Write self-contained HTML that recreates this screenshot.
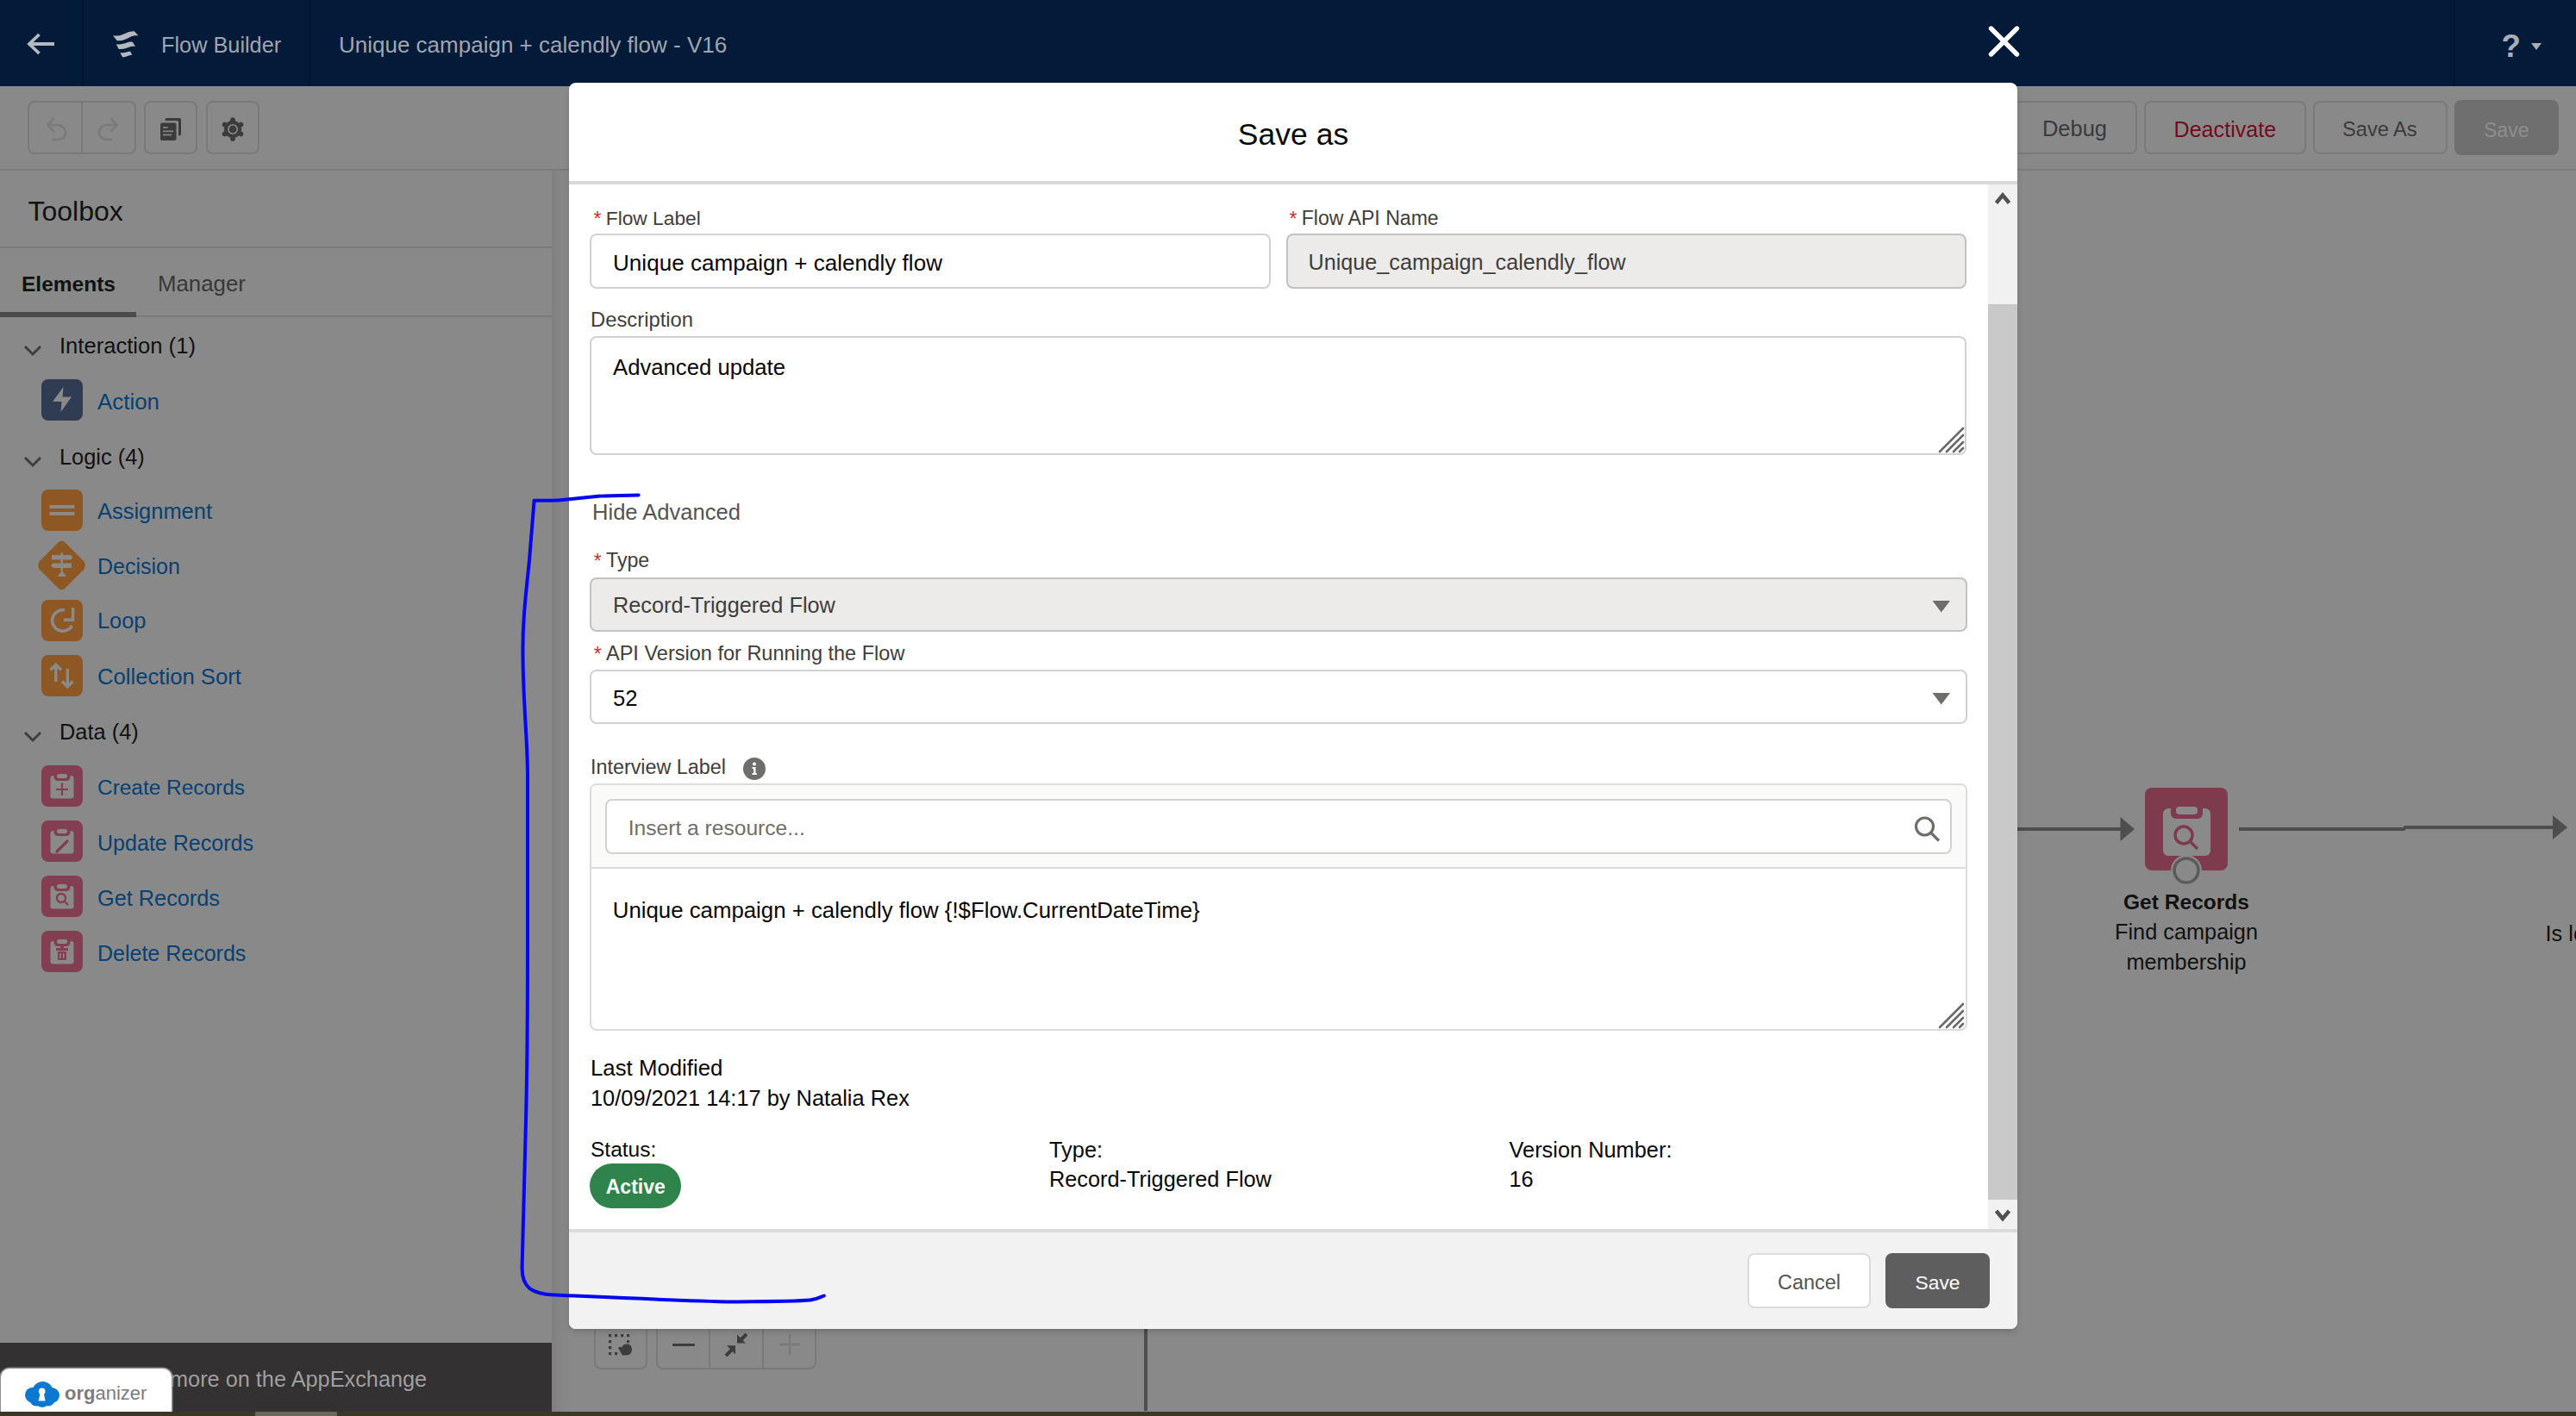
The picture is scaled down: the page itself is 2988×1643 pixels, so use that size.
<!DOCTYPE html>
<html><head><meta charset="utf-8"><style>
html,body{margin:0;padding:0;width:2988px;height:1643px;overflow:hidden;background:#898989;font-family:"Liberation Sans", sans-serif;}
.t{position:absolute;line-height:1;white-space:nowrap;font-family:"Liberation Sans", sans-serif;}
svg{overflow:visible}
</style></head><body>
<div style="position:absolute;left:0px;top:0px;width:2988px;height:100px;background:#031a38"></div>
<div style="position:absolute;left:95px;top:0px;width:2px;height:100px;background:#02132b"></div>
<div style="position:absolute;left:358px;top:0px;width:2px;height:100px;background:#02132b"></div>
<div style="position:absolute;left:2846px;top:0px;width:2px;height:100px;background:#02132b"></div>
<svg style="position:absolute;left:0;top:0" width="400" height="100">
<path d="M45.5,40 L34,51 L45.5,62 M34,51 L63,51" fill="none" stroke="#b4b9c0" stroke-width="3.8" stroke-linecap="butt" stroke-linejoin="miter"/>
<g fill="#b4b9c0">
<path d="M131,41.3 C138.5,42.3 142,40.5 146,38.6 C150,36.8 153,36 156,36.4 L160.6,41.6 C157,41 154,41.6 150.5,43.2 C146.5,45.2 142.5,47.4 137.5,47.3 L135.8,47.2 Z"/>
<path d="M134.8,51.4 C140.5,52 144,50.6 147,49.5 C150,48.4 152,48.3 153.8,48.7 L157,54 C154.5,53.4 152,53.8 149,55 C146,56.2 142.8,57.1 139.5,57 L137.8,56.9 Z"/>
<path d="M139.4,61 C143.5,61.6 146,60.6 148.3,59.9 C149.8,59.5 150.8,59.6 151.5,59.9 L153.2,64.2 C151.5,63.9 150,64.2 148,65 C146,65.8 144,66.3 142,66.2 Z"/>
</g>
</svg>
<div class="t" style="left:187.00px;top:39.83px;font-size:25.3px;color:#9fa6b1;font-weight:400;">Flow Builder</div>
<div class="t" style="left:393.00px;top:38.79px;font-size:26.0px;color:#9fa6b1;font-weight:400;">Unique campaign + calendly flow - V16</div>
<svg style="position:absolute;left:2300px;top:24px" width="48" height="48"><path d="M9.5,9 L39.5,39 M39.5,9 L9.5,39" stroke="#fff" stroke-width="5.4" stroke-linecap="round"/></svg>
<div class="t" style="left:2901.50px;top:36.10px;font-size:36.5px;color:#a9aeb6;font-weight:700;">?</div>
<svg style="position:absolute;left:2930px;top:45px" width="24" height="20"><path d="M6,5 L18,5 L12,13 Z" fill="#a9aeb6"/></svg>
<div style="position:absolute;left:0px;top:100px;width:2988px;height:97px;background:#898989"></div>
<div style="position:absolute;left:0px;top:196px;width:2988px;height:2px;background:#7b7b7b"></div>
<div style="position:absolute;left:32px;top:117px;width:126px;height:62px;box-sizing:border-box;border:2px solid #7a7a7a;border-radius:8px;"></div>
<div style="position:absolute;left:94px;top:117px;width:2px;height:62px;background:#7a7a7a"></div>
<div style="position:absolute;left:167px;top:117px;width:62px;height:62px;box-sizing:border-box;border:2px solid #7a7a7a;border-radius:8px;"></div>
<div style="position:absolute;left:239px;top:117px;width:62px;height:62px;box-sizing:border-box;border:2px solid #7a7a7a;border-radius:8px;"></div>
<svg style="position:absolute;left:0;top:100px" width="320" height="100">
<g fill="none" stroke="#7a7a7a" stroke-width="2.6" stroke-linecap="round" stroke-linejoin="round">
<path d="M55,45 L62,38 M55,45 L62,52 M56,45 L66,45 C72,45 76,49 76,54 C76,59 72,62 66,62 L62,62"/>
<path d="M136,45 L129,38 M136,45 L129,52 M135,45 L125,45 C119,45 115,49 115,54 C115,59 119,62 125,62 L129,62"/>
</g>
<path fill="#3b3b3b" d="M193.5,37 L208,37 Q210,37 210,39 L210,55.5 Q210,57.5 208,57.5 L207,57.5 L207,42 Q207,40 205,40 L191.5,40 L191.5,39 Q191.5,37 193.5,37 Z"/>
<rect x="186" y="42.5" width="18.5" height="20.5" rx="2" fill="#3b3b3b"/>
<g fill="#8a8a8a"><rect x="189" y="47.2" width="5.5" height="1.6"/><rect x="189" y="51.5" width="12" height="1.6"/><rect x="189" y="55.6" width="10" height="1.7"/></g>
<g fill="#3b3b3b"><circle cx="270" cy="50" r="10.2"/><circle cx="270.00" cy="38.80" r="2.6"/><circle cx="279.70" cy="44.40" r="2.6"/><circle cx="279.70" cy="55.60" r="2.6"/><circle cx="270.00" cy="61.20" r="2.6"/><circle cx="260.30" cy="55.60" r="2.6"/><circle cx="260.30" cy="44.40" r="2.6"/><rect x="267.4" y="37.5" width="5.2" height="6" transform="rotate(0 270 50)"/><rect x="267.4" y="37.5" width="5.2" height="6" transform="rotate(60 270 50)"/><rect x="267.4" y="37.5" width="5.2" height="6" transform="rotate(120 270 50)"/><rect x="267.4" y="37.5" width="5.2" height="6" transform="rotate(180 270 50)"/><rect x="267.4" y="37.5" width="5.2" height="6" transform="rotate(240 270 50)"/><rect x="267.4" y="37.5" width="5.2" height="6" transform="rotate(300 270 50)"/></g>
<circle cx="270" cy="50" r="5.2" fill="none" stroke="#8a8a8a" stroke-width="1.6"/><circle cx="270" cy="50" r="3.4" fill="#3b3b3b"/>
</svg>
<div style="position:absolute;left:2300px;top:117px;width:179px;height:62px;box-sizing:border-box;border:2px solid #7a7a7a;border-radius:8px;"></div>
<div style="position:absolute;left:2487px;top:117px;width:188px;height:62px;box-sizing:border-box;border:2px solid #7a7a7a;border-radius:8px;"></div>
<div style="position:absolute;left:2683px;top:117px;width:156px;height:62px;box-sizing:border-box;border:2px solid #7a7a7a;border-radius:8px;"></div>
<div style="position:absolute;left:2847px;top:116px;width:121px;height:64px;background:#6f6f6f;border-radius:8px"></div>
<div class="t" style="left:2369.00px;top:137.45px;font-size:25.45px;color:#3a3a3a;font-weight:400;">Debug</div>
<div class="t" style="left:2521.50px;top:137.72px;font-size:25.13px;color:#730b1a;font-weight:400;">Deactivate</div>
<div class="t" style="left:2717.00px;top:138.98px;font-size:23.64px;color:#3a3a3a;font-weight:400;">Save As</div>
<div class="t" style="left:2881.00px;top:139.53px;font-size:23.0px;color:#8e8e8e;font-weight:400;">Save</div>
<div style="position:absolute;left:0px;top:198px;width:640px;height:1360px;background:#898989"></div>
<div style="position:absolute;left:640px;top:198px;width:20px;height:1440px;background:linear-gradient(to right,#808080,#868686 60%,#888888)"></div>
<div class="t" style="left:32.50px;top:228.91px;font-size:32px;color:#121212;font-weight:400;">Toolbox</div>
<div style="position:absolute;left:0px;top:286px;width:640px;height:2px;background:#7b7b7b"></div>
<div class="t" style="left:25.00px;top:318.26px;font-size:24.5px;color:#111;font-weight:700;">Elements</div>
<div class="t" style="left:183.00px;top:317.16px;font-size:25.8px;color:#383838;font-weight:400;">Manager</div>
<div style="position:absolute;left:0px;top:366px;width:640px;height:2px;background:#7b7b7b"></div>
<div style="position:absolute;left:0px;top:362px;width:158px;height:6px;background:#4a4a4a"></div>
<svg style="position:absolute;left:26px;top:399px" width="24" height="20"><path d="M3,3 L12,12 L21,3" fill="none" stroke="#3e3e3e" stroke-width="3"/></svg>
<div class="t" style="left:69.00px;top:389.32px;font-size:25.6px;color:#111;font-weight:400;">Interaction (1)</div>
<svg style="position:absolute;left:26px;top:528px" width="24" height="20"><path d="M3,3 L12,12 L21,3" fill="none" stroke="#3e3e3e" stroke-width="3"/></svg>
<div class="t" style="left:69.00px;top:518.49px;font-size:25.4px;color:#111;font-weight:400;">Logic (4)</div>
<svg style="position:absolute;left:26px;top:847px" width="24" height="20"><path d="M3,3 L12,12 L21,3" fill="none" stroke="#3e3e3e" stroke-width="3"/></svg>
<div class="t" style="left:69.00px;top:837.49px;font-size:25.4px;color:#111;font-weight:400;">Data (4)</div>
<div class="t" style="left:113.00px;top:454.07px;font-size:25.9px;color:#074172;font-weight:400;">Action</div>
<div class="t" style="left:113.00px;top:581.44px;font-size:25.46px;color:#074172;font-weight:400;">Assignment</div>
<div class="t" style="left:113.00px;top:644.81px;font-size:25.03px;color:#074172;font-weight:400;">Decision</div>
<div class="t" style="left:113.00px;top:708.49px;font-size:25.4px;color:#074172;font-weight:400;">Loop</div>
<div class="t" style="left:113.00px;top:772.76px;font-size:25.68px;color:#074172;font-weight:400;">Collection Sort</div>
<div class="t" style="left:113.00px;top:901.82px;font-size:24.42px;color:#074172;font-weight:400;">Create Records</div>
<div class="t" style="left:113.00px;top:966.29px;font-size:25.05px;color:#074172;font-weight:400;">Update Records</div>
<div class="t" style="left:113.00px;top:1029.58px;font-size:25.3px;color:#074172;font-weight:400;">Get Records</div>
<div class="t" style="left:113.00px;top:1093.83px;font-size:25.0px;color:#074172;font-weight:400;">Delete Records</div>
<svg style="position:absolute;left:0;top:0" width="120" height="1140">
<rect x="48" y="440" width="48" height="48" rx="8" fill="#2f3c51"/>
<path d="M73.5,449 L61,466 L71.5,466 L70.5,478 L83,460.5 L72.5,460.5 Z" fill="#8a8a8a"/>
<rect x="48" y="568" width="48" height="48" rx="8" fill="#8d5824"/>
<rect x="57.5" y="586" width="29" height="4" rx="1" fill="#8a8a8a"/><rect x="57.5" y="594" width="29" height="4" rx="1" fill="#8a8a8a"/>
<path d="M71.5,627.5 Q73.5,627.5 75.5,629.5 L97.5,651.5 Q100,656 97.5,660.5 L75.5,682.5 Q71.5,686 67.5,682.5 L45.5,660.5 Q43,656 45.5,651.5 L67.5,629.5 Q69.5,627.5 71.5,627.5 Z" fill="#8d5824"/>
<g fill="#8a8a8a"><path d="M60,644 L82,644 L84.5,646.8 L82,649.5 L60,649.5 Z"/><path d="M61.5,653.6 L83,653.6 L83,659 L61.5,659 L58.8,656.3 Z"/><rect x="70.3" y="641.5" width="2.5" height="3"/><rect x="70.3" y="649" width="2.5" height="5"/><rect x="70.3" y="658.5" width="2.5" height="4"/><path d="M66.8,669 L71.9,662 L77,669 Z"/></g>
<rect x="48" y="696" width="48" height="48" rx="8" fill="#8d5824"/>
<path d="M75,708 A12.2,12.2 0 1 0 83.5,726" fill="none" stroke="#8a8a8a" stroke-width="3.6"/>
<path d="M84.6,705 L84.6,719.2 L74,719.2" fill="none" stroke="#8a8a8a" stroke-width="3.4"/>
<rect x="48" y="760" width="48" height="48" rx="8" fill="#8d5824"/>
<g fill="none" stroke="#8a8a8a" stroke-width="3.4"><path d="M64.8,772 L64.8,791 M58.5,777.5 L64.8,771.2 L71.1,777.5"/><path d="M78.3,776 L78.3,796 M72,790.5 L78.3,796.8 L84.6,790.5"/></g>
<rect x="48" y="888" width="48" height="48" rx="8" fill="#833e52"/>
<rect x="58.5" y="900" width="27" height="26.5" rx="3" fill="#8a8a8a"/>
<rect x="62.5" y="895.5" width="19" height="10.5" rx="4.5" fill="#833e52"/><rect x="66" y="898" width="12" height="5" rx="2.5" fill="#8a8a8a"/>
<rect x="48" y="952" width="48" height="48" rx="8" fill="#833e52"/>
<rect x="58.5" y="964" width="27" height="26.5" rx="3" fill="#8a8a8a"/>
<rect x="62.5" y="959.5" width="19" height="10.5" rx="4.5" fill="#833e52"/><rect x="66" y="962" width="12" height="5" rx="2.5" fill="#8a8a8a"/>
<rect x="48" y="1016" width="48" height="48" rx="8" fill="#833e52"/>
<rect x="58.5" y="1028" width="27" height="26.5" rx="3" fill="#8a8a8a"/>
<rect x="62.5" y="1023.5" width="19" height="10.5" rx="4.5" fill="#833e52"/><rect x="66" y="1026" width="12" height="5" rx="2.5" fill="#8a8a8a"/>
<rect x="48" y="1080" width="48" height="48" rx="8" fill="#833e52"/>
<rect x="58.5" y="1092" width="27" height="26.5" rx="3" fill="#8a8a8a"/>
<rect x="62.5" y="1087.5" width="19" height="10.5" rx="4.5" fill="#833e52"/><rect x="66" y="1090" width="12" height="5" rx="2.5" fill="#8a8a8a"/>

<g stroke="#833e52" stroke-width="2.2" fill="none"><path d="M72,908.5 L72,923 M65,916 L79,916"/></g>
<g stroke="#833e52" stroke-width="3.2" fill="none" stroke-linecap="round"><path d="M66,988 L78,976"/></g>
<g stroke="#833e52" stroke-width="2.4" fill="none"><circle cx="71" cy="1042" r="5"/><path d="M74.5,1045.5 L79,1050"/></g>
<g fill="#833e52"><rect x="65" y="1100" width="14" height="3"/><rect x="67" y="1104" width="10" height="10"/><rect x="70" y="1097" width="4" height="3"/></g>
<g fill="#8a8a8a"><rect x="69" y="1106" width="1.5" height="6"/><rect x="73" y="1106" width="1.5" height="6"/></g>
</svg>
<div style="position:absolute;left:0px;top:1558px;width:640px;height:80px;background:#333131"></div>
<div class="t" style="left:197.00px;top:1587.58px;font-size:25.3px;color:#a09f9f;font-weight:400;">more on the AppExchange</div>
<div style="position:absolute;left:1px;top:1588px;width:198px;height:50px;background:#fff;border-radius:10px 10px 0 0;box-shadow:0 0 0 1.5px #8f8f8f"></div>
<svg style="position:absolute;left:20px;top:1596px" width="60" height="42">
<g fill="#0b79d0"><circle cx="29.5" cy="19" r="12"/><circle cx="18" cy="22.7" r="9"/><circle cx="40" cy="23" r="9"/><circle cx="29" cy="28" r="9"/><circle cx="22" cy="28" r="7.5"/><circle cx="36" cy="28" r="7.5"/></g>
<circle cx="28.7" cy="18.4" r="3.8" fill="#fff"/><path d="M26.8,20 L30.6,20 L32.6,29.5 L24.6,29.5 Z" fill="#fff"/>
</svg>
<div class="t" style="left:75.00px;top:1606.37px;font-size:22px;color:#7b7b7b;font-weight:400;"><b>org</b>anizer</div>
<div style="position:absolute;left:0px;top:1638px;width:2988px;height:5px;background:#3a3727"></div>
<div style="position:absolute;left:296px;top:1638px;width:95px;height:5px;background:#6a685c"></div>
<div style="position:absolute;left:660px;top:198px;width:2328px;height:1440px;background:#898989"></div>
<div style="position:absolute;left:689px;top:1527px;width:62px;height:62px;box-sizing:border-box;border:2px solid #7a7a7a;border-radius:8px;"></div>
<div style="position:absolute;left:761px;top:1527px;width:186px;height:62px;box-sizing:border-box;border:2px solid #7a7a7a;border-radius:8px;"></div>
<div style="position:absolute;left:822px;top:1527px;width:2px;height:62px;background:#7a7a7a"></div>
<div style="position:absolute;left:884px;top:1527px;width:2px;height:62px;background:#7a7a7a"></div>
<svg style="position:absolute;left:680px;top:1540px" width="280" height="40">
<g fill="#3d3d3d"><rect x="26" y="8" width="3.2" height="3.2"/><rect x="33" y="8" width="3.2" height="3.2"/><rect x="40" y="8" width="3.2" height="3.2"/><rect x="47" y="8" width="3.2" height="3.2"/>
<rect x="26" y="15" width="3.2" height="3.2"/><rect x="47" y="15" width="3.2" height="3.2"/><rect x="26" y="22" width="3.2" height="3.2"/><rect x="26" y="29" width="3.2" height="3.2"/><rect x="33" y="29" width="3.2" height="3.2"/>
<path d="M37,24 Q39,22 41,23.5 L43,20.5 Q46,19 50,20 Q53,22 53,26 L52,30 Q50,32.5 46,32.5 L42,32.5 Z"/></g>
<rect x="100" y="19" width="26" height="3" rx="1" fill="#3d3d3d"/>
<g fill="#3d3d3d"><path d="M175,8.6 L175,18.6 L185,18.6 Z"/><path d="M173,31.5 L173,21.3 L163,21.3 Z"/></g>
<g stroke="#3d3d3d" stroke-width="4"><path d="M186,8 L178,16"/><path d="M162,33 L170,25"/></g>
<g stroke="#7a7a7a" stroke-width="2.5"><path d="M236,8 L236,32 M224,20 L248,20"/></g>
</svg>
<div style="position:absolute;left:1327px;top:1541px;width:4px;height:96px;background:#4e4e50"></div>
<svg style="position:absolute;left:2300px;top:900px" width="688" height="260">
<path d="M0,62 L160,62" stroke="#4e4e50" stroke-width="4"/>
<path d="M159.5,48 L176,62 L159.5,76 Z" fill="#4e4e50"/>
<path d="M297,62 L488,62 L490,60 L661,60" stroke="#4e4e50" stroke-width="4" fill="none"/>
<path d="M661,46 L678,60 L661,74 Z" fill="#4e4e50"/>
<rect x="188" y="14" width="96" height="96" rx="8" fill="#7f3b4e"/>
<rect x="209" y="38" width="55" height="55" rx="6" fill="#8a8a8a"/>
<rect x="218" y="30" width="37" height="20" rx="6" fill="#7f3b4e"/><rect x="224" y="36" width="25" height="9" rx="4" fill="#8a8a8a"/>
<g stroke="#7f3b4e" stroke-width="3.5" fill="none"><circle cx="233" cy="69" r="10"/><path d="M240,76 L249,85"/></g>
<circle cx="236" cy="110" r="18" fill="#898989"/>
<circle cx="236" cy="110" r="14" fill="#898989" stroke="#5b5b5b" stroke-width="3.5"/>
</svg>
<div class="t" style="left:2536.00px;top:1034.51px;font-size:24.55px;color:#111;font-weight:700;transform:translateX(-50%);">Get Records</div>
<div class="t" style="left:2536.00px;top:1069.18px;font-size:25.3px;color:#111;font-weight:400;transform:translateX(-50%);">Find campaign</div>
<div class="t" style="left:2536.00px;top:1103.88px;font-size:25.3px;color:#111;font-weight:400;transform:translateX(-50%);">membership</div>
<div class="t" style="left:2952.60px;top:1071.18px;font-size:25.3px;color:#111;font-weight:400;">Is lead</div>
<div style="position:absolute;left:660px;top:96px;width:1680px;height:1446px;background:#fff;border-radius:8px;box-shadow:0 4px 8px -2px rgba(0,0,0,0.22);overflow:hidden"><div style="position:absolute;left:0;top:114px;width:1680px;height:4px;background:#d9d9d9"></div><div style="position:absolute;left:0;top:1330px;width:1680px;height:4px;background:#dcdbdb"></div><div style="position:absolute;left:0;top:1334px;width:1680px;height:112px;background:#f3f2f2"></div><div style="position:absolute;left:1646px;top:118px;width:34px;height:1212px;background:#f1f1f1"></div><div style="position:absolute;left:1646px;top:257px;width:34px;height:1039px;background:#c9c9c9"></div></div>
<svg style="position:absolute;left:2306px;top:214px" width="34" height="1212">
<path d="M9.5,21.5 L17,12.5 L24.5,21.5" fill="none" stroke="#505050" stroke-width="4.4"/>
<path d="M9.5,1191 L17,1200 L24.5,1191" fill="none" stroke="#505050" stroke-width="4.4"/>
</svg>
<div class="t" style="left:1500.00px;top:139.44px;font-size:35.5px;color:#080707;font-weight:400;transform:translateX(-50%);">Save as</div>
<div class="t" style="left:688.50px;top:242.78px;font-size:23px;color:#c23934;font-weight:400;">*</div>
<div class="t" style="left:702.75px;top:241.99px;font-size:22.75px;color:#3e3e3c;font-weight:400;">Flow Label</div>
<div style="position:absolute;left:684px;top:271px;width:790px;height:64px;box-sizing:border-box;border:2px solid #d2d2d2;border-radius:8px;background:#fff;"></div>
<div class="t" style="left:711.00px;top:291.67px;font-size:26.08px;color:#080707;font-weight:400;">Unique campaign + calendly flow</div>
<div class="t" style="left:1495.50px;top:242.78px;font-size:23px;color:#c23934;font-weight:400;">*</div>
<div class="t" style="left:1509.75px;top:241.72px;font-size:23.07px;color:#3e3e3c;font-weight:400;">Flow API Name</div>
<div style="position:absolute;left:1492px;top:271px;width:789px;height:64px;box-sizing:border-box;border:2px solid #c2c2c2;border-radius:8px;background:#ecebea;"></div>
<div class="t" style="left:1517.50px;top:292.41px;font-size:25.2px;color:#3e3e3c;font-weight:400;">Unique_campaign_calendly_flow</div>
<div class="t" style="left:685.00px;top:358.60px;font-size:23.8px;color:#3e3e3c;font-weight:400;">Description</div>
<div style="position:absolute;left:684px;top:390px;width:1597px;height:138px;box-sizing:border-box;border:2px solid #d2d2d2;border-radius:8px;background:#fff;"></div>
<div class="t" style="left:711.00px;top:413.74px;font-size:25.7px;color:#080707;font-weight:400;">Advanced update</div>
<svg style="position:absolute;left:2245px;top:492px" width="36" height="36"><g stroke="#6a6a6a" stroke-width="2.6" stroke-linecap="round">
<path d="M5,32 L32,5 M13,32 L32,13 M21,32 L32,21 M28,32 L32,28"/></g></svg>
<div class="t" style="left:687.00px;top:582.35px;font-size:25.57px;color:#545454;font-weight:400;">Hide Advanced</div>
<div class="t" style="left:688.75px;top:640.28px;font-size:23px;color:#c23934;font-weight:400;">*</div>
<div class="t" style="left:703.00px;top:639.11px;font-size:23.2px;color:#3e3e3c;font-weight:400;">Type</div>
<div style="position:absolute;left:684px;top:670px;width:1598px;height:63px;box-sizing:border-box;border:2px solid #c2c2c2;border-radius:8px;background:#ecebea;"></div>
<div class="t" style="left:711.00px;top:690.31px;font-size:25.32px;color:#3e3e3c;font-weight:400;">Record-Triggered Flow</div>
<div class="t" style="left:688.75px;top:748.28px;font-size:23px;color:#c23934;font-weight:400;">*</div>
<div class="t" style="left:703.00px;top:746.84px;font-size:23.52px;color:#3e3e3c;font-weight:400;">API Version for Running the Flow</div>
<div style="position:absolute;left:684px;top:777px;width:1598px;height:63px;box-sizing:border-box;border:2px solid #d2d2d2;border-radius:8px;background:#fff;"></div>
<div class="t" style="left:711.00px;top:798.32px;font-size:25.6px;color:#080707;font-weight:400;">52</div>
<svg style="position:absolute;left:2236px;top:690px" width="32" height="140"><path d="M5.5,7 L26,7 L15.75,20.5 Z" fill="#706e6b"/><path d="M5.5,114 L26,114 L15.75,127.5 Z" fill="#706e6b"/></svg>
<div class="t" style="left:685.00px;top:878.99px;font-size:23.34px;color:#3e3e3c;font-weight:400;">Interview Label</div>
<div style="position:absolute;left:862px;top:879px;width:26px;height:26px;border-radius:50%;background:#706e6b"></div>
<svg style="position:absolute;left:862px;top:879px" width="26" height="26"><circle cx="13" cy="7.5" r="2" fill="#fff"/><path d="M10.5,11 L14.5,11 L14.5,18 L16,18 L16,20 L10.5,20 L10.5,18 L12,18 L12,13 L10.5,13 Z" fill="#fff"/></svg>
<div style="position:absolute;left:684px;top:909px;width:1598px;height:287px;box-sizing:border-box;border:2px solid #dddbda;border-radius:8px;background:#fff;"></div>
<div style="position:absolute;left:686px;top:911px;width:1594px;height:96px;background:#fafaf9;border-radius:6px 6px 0 0"></div>
<div style="position:absolute;left:686px;top:1006px;width:1594px;height:2px;background:#dddbda"></div>
<div style="position:absolute;left:702px;top:927px;width:1562px;height:64px;box-sizing:border-box;border:2px solid #d2d2d2;border-radius:8px;background:#fff;"></div>
<div class="t" style="left:728.75px;top:949.17px;font-size:24.6px;color:#706e6b;font-weight:400;">Insert a resource...</div>
<svg style="position:absolute;left:2215px;top:942px" width="40" height="40"><g stroke="#706e6b" stroke-width="3.2" fill="none"><circle cx="17.5" cy="17" r="10"/><path d="M24.5,24 L34,33.5"/></g></svg>
<div class="t" style="left:710.75px;top:1043.66px;font-size:25.8px;color:#080707;font-weight:400;">Unique campaign + calendly flow {!$Flow.CurrentDateTime}</div>
<svg style="position:absolute;left:2245px;top:1160px" width="36" height="36"><g stroke="#6a6a6a" stroke-width="2.6" stroke-linecap="round">
<path d="M5,32 L32,5 M13,32 L32,13 M21,32 L32,21 M28,32 L32,28"/></g></svg>
<div class="t" style="left:685.00px;top:1226.91px;font-size:25.8px;color:#080707;font-weight:400;">Last Modified</div>
<div class="t" style="left:685.00px;top:1262.24px;font-size:25.4px;color:#080707;font-weight:400;">10/09/2021 14:17 by Natalia Rex</div>
<div class="t" style="left:685.00px;top:1321.76px;font-size:24.5px;color:#080707;font-weight:400;">Status:</div>
<div style="position:absolute;left:684px;top:1350px;width:106px;height:52px;background:#2e844a;border-radius:26px"></div>
<div class="t" style="left:702.75px;top:1366.03px;font-size:23.0px;color:#fff;font-weight:700;">Active</div>
<div class="t" style="left:1217.00px;top:1321.51px;font-size:25.38px;color:#080707;font-weight:400;">Type:</div>
<div class="t" style="left:1217.00px;top:1356.16px;font-size:25.32px;color:#080707;font-weight:400;">Record-Triggered Flow</div>
<div class="t" style="left:1750.50px;top:1321.51px;font-size:25.38px;color:#080707;font-weight:400;">Version Number:</div>
<div class="t" style="left:1750.50px;top:1356.09px;font-size:25.4px;color:#080707;font-weight:400;">16</div>
<div style="position:absolute;left:2027px;top:1454px;width:143px;height:64px;box-sizing:border-box;border:2px solid #dddbda;border-radius:8px;background:#fff"></div>
<div class="t" style="left:2062.00px;top:1476.84px;font-size:23.45px;color:#545454;font-weight:400;">Cancel</div>
<div style="position:absolute;left:2187px;top:1454px;width:121px;height:64px;background:#5e5e5e;border-radius:8px"></div>
<div class="t" style="left:2221.50px;top:1477.40px;font-size:22.8px;color:#fff;font-weight:400;">Save</div>
<svg style="position:absolute;left:0;top:0" width="1000" height="1643"><path d="M740.7,574.5 C720,575 700,575 696.5,575.6 L657.6,579.5 C650,580.8 640,581 619.6,580.7 L614,650 C610,690 606,720 606.5,760 C607,820 612,860 612,900 L612,1100 C612,1200 611,1260 610,1300 L605.6,1470 C605,1495 618,1501 642,1502.5 C700,1505 780,1509 852,1510.5 C900,1510 935,1510 942,1508 C948,1507 952,1505 955.8,1503.5" fill="none" stroke="#0505f5" stroke-width="4" stroke-linecap="round" stroke-linejoin="round"/></svg>
</body></html>
